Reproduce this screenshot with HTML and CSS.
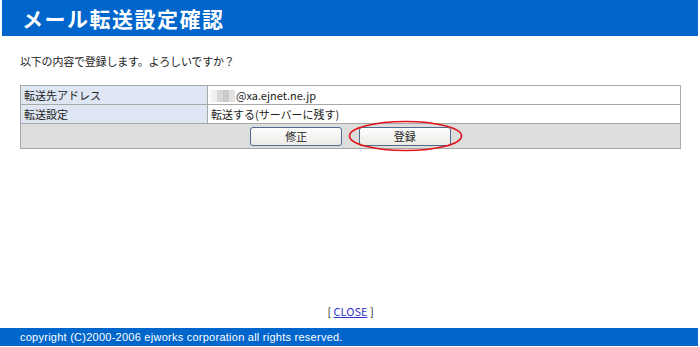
FILE: index.html
```html
<!DOCTYPE html>
<html lang="ja">
<head>
  <meta charset="UTF-8" />
  <title>メール転送設定確認</title>
  <link rel="stylesheet" href="styles.css">
</head>
<body>
  <div class="page">
    <header class="title-bar">
      <h1>メール転送設定確認</h1>
    </header>

    <p class="lead">以下の内容で登録します。よろしいですか？</p>

    <table class="confirm">
      <tr>
        <th>転送先アドレス</th>
        <td><span class="mosaic"><i></i><i></i><i></i><i></i></span>@xa.ejnet.ne.jp</td>
      </tr>
      <tr>
        <th>転送設定</th>
        <td>転送する(サーバーに残す)</td>
      </tr>
      <tr>
        <td class="actions" colspan="2">
          <button class="btn">修正</button>
          <span class="mark">
            <button class="btn">登録</button>
            <svg class="ring" width="115" height="32" viewBox="0 0 115 32">
              <ellipse cx="57.5" cy="16" rx="56" ry="14.5" fill="none" stroke="#e0141a" stroke-width="1.6"/>
            </svg>
          </span>
        </td>
      </tr>
    </table>

    <div class="close">[ <a href="#">CLOSE</a> ]</div>

    <footer class="copy">copyright (C)2000-2006 ejworks corporation all rights reserved.</footer>
  </div>
</body>
</html>
```

FILE: styles.css
```css
body {
  margin: 0;
  font-family: "Noto Sans CJK JP", "Liberation Sans", sans-serif;
  color: #222;
  background: #fff;
}
.page {
  display: flex;
  flex-direction: column;
  height: 347px;
  width: 700px;
}
.title-bar {
  background-color: #0066cc;
  height: 36px;
  margin: 0 2px;
  display: flex;
  align-items: center;
}
.title-bar h1 {
  margin: 0 0 0 20px;
  color: #fff;
  font-size: 21px;
  font-weight: bold;
  letter-spacing: 1.5px;
}
.lead {
  margin: 17px 0 0 20px;
  font-size: 11px;
  letter-spacing: -0.2px;
}
.confirm {
  margin: 16px 0 0 20px;
  width: 661px;
  border-collapse: collapse;
  font-size: 11px;
}
.confirm th,
.confirm td {
  border: 1px solid #a8a8a8;
  height: 18px;
  padding: 0 3px;
  text-align: left;
  font-weight: normal;
  line-height: 14px;
}
.confirm th {
  width: 180px;
  background-color: #dfe6f4;
}
.confirm td {
  background-color: #fff;
}
.confirm td.actions {
  background-color: #dddddd;
  text-align: center;
  height: 24px;
  padding: 0;
}
.mosaic {
  display: inline-grid;
  grid-template-columns: 6px 6px 6px 6px;
  vertical-align: -2px;
  margin-right: 1px;
  height: 12px;
}
.mosaic i:nth-child(1) { background: #f0f0f0; }
.mosaic i:nth-child(2) { background: #d8d8d8; }
.mosaic i:nth-child(3) { background: #cacaca; }
.mosaic i:nth-child(4) { background: #e2e2e2; }
.btn {
  width: 92px;
  height: 19px;
  font-family: "Noto Sans CJK JP", sans-serif;
  font-size: 11px;
  line-height: 15px;
  padding: 0;
  color: #222;
  background: linear-gradient(#fdfdfd, #ecebe6);
  border: 1px solid #4f6b8e;
  border-radius: 3px;
  vertical-align: middle;
}
.mark {
  position: relative;
  display: inline-block;
  margin-left: 14px;
  vertical-align: middle;
}
.ring {
  position: absolute;
  left: -11px;
  top: -7px;
}
.close {
  margin-top: auto;
  text-align: center;
  font-size: 11px;
  margin-bottom: 9px;
  padding-left: 1px;
}
.close a {
  color: #3333cc;
}
.copy {
  background-color: #0066cc;
  color: #fff;
  font-family: "Liberation Sans", sans-serif;
  font-size: 11px;
  height: 18px;
  line-height: 18px;
  padding-left: 20px;
  margin: 0 2px 1px 0;
  letter-spacing: 0.25px;
}
```
